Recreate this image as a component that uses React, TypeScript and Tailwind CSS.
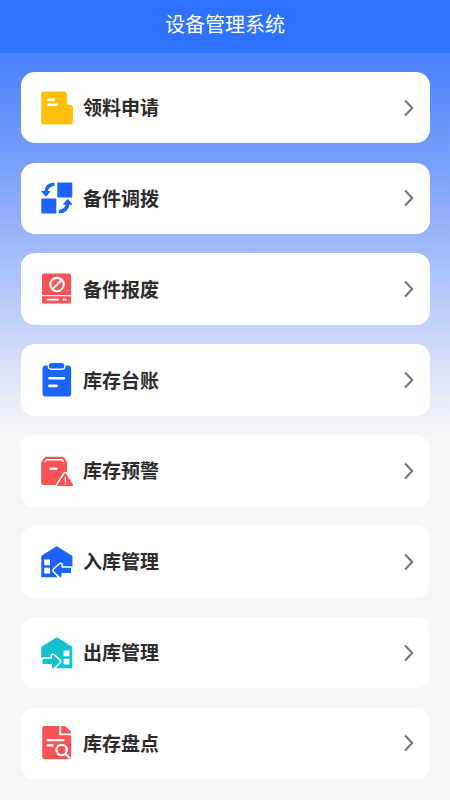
import type { ReactNode } from "react";

function Warehouse({ flip = false }: { flip?: boolean }) {
  const color = flip ? "#12c3cb" : "#1b63fb";
  return (
    <g transform={flip ? "translate(33.6 0) scale(-1 1)" : undefined}>
      <path
        fill={color}
        d="M15.8 2.8Q16.7 2.2 17.6 2.8L31.7 11.6Q32.4 12 32.4 12.8V33.2H2Q1.3 33.2 1.3 32.4V12.8Q1.3 12 1.9 11.6Z"
      />
      <path fill="#fff" d="M4.2 15.6H10V21.3H4.2ZM4.2 23.7H10V29.4H4.2Z" />
      <path fill="#fff" d="M13.6 27.5 21 23H34V35H18.4Z" />
      <path
        fill={color}
        stroke="#fff"
        strokeWidth="3"
        strokeLinejoin="round"
        paintOrder="stroke"
        d="M14.2 25.4 19.7 20.4Q21.6 19.2 21.6 21.6V23.8H31V29H21.6V31.4Q21.4 33.8 19.5 32.4L14.2 27.4Q13.1 26.4 14.2 25.4Z"
      />
    </g>
  );
}

const items: { label: string; icon: ReactNode }[] = [
  {
    label: "领料申请",
    icon: (
      <>
        <path
          fill="#ffc107"
          d="M4 1.4H24Q26.9 1.4 26.9 4.3V12.4Q27 15 29.7 15H30.8Q33 15.2 33 17.6V31.8Q33 34.5 30.3 34.5H4Q1.3 34.5 1.3 31.8V4.1Q1.3 1.4 4 1.4Z"
        />
        <path stroke="#fff" strokeWidth="2.5" strokeLinecap="round" d="M8.4 9.8H14M8.4 14.7H17" />
      </>
    ),
  },
  {
    label: "备件调拨",
    icon: (
      <>
        <g fill="#1b63fb">
          <rect x="17.3" y="2.5" width="15" height="15" rx="1" />
          <rect x="1.3" y="18.5" width="15" height="15" rx="1" />
          <path
            stroke="#1b63fb"
            strokeWidth="1"
            strokeLinejoin="round"
            d="M1.9 11.5H9.9L5.9 16.3ZM23.5 24.2H31.9L27.7 19.4Z"
          />
        </g>
        <path
          stroke="#1b63fb"
          strokeWidth="3.5"
          fill="none"
          d="M14.5 4.2Q6.6 4.4 5.9 12.4M19 31.8Q27 31.2 27.7 23.5"
        />
      </>
    ),
  },
  {
    label: "备件报废",
    icon: (
      <>
        <path
          fill="#fb5355"
          d="M3.6 2.6H29.4Q31 2.6 31 4.2V24H2V4.2Q2 2.6 3.6 2.6ZM2 25.3H31V31Q31 32.6 29.4 32.6H3.6Q2 32.6 2 31Z"
        />
        <g stroke="#fff" fill="none" strokeWidth="2.1">
          <circle cx="17" cy="13.6" r="6.7" />
          <path d="M12.4 18.2 21.6 9" />
          <path strokeWidth="1.6" d="M6.7 28.6H19M22.8 28.6H26.7" />
        </g>
      </>
    ),
  },
  {
    label: "库存台账",
    icon: (
      <>
        <rect x="2.5" y="3.4" width="28.6" height="31.2" rx="3.4" fill="#1b63fb" />
        <rect x="7.6" y="-.5" width="18" height="8.5" rx="4" fill="#fff" />
        <rect x="8.9" y=".9" width="15.4" height="5.7" rx="2.6" fill="#1b63fb" />
        <path stroke="#fff" strokeWidth="2.6" strokeLinecap="round" d="M9.4 16.2H24M9.4 23.9H16.6" />
      </>
    ),
  },
  {
    label: "库存预警",
    icon: (
      <>
        <path
          fill="#fb5355"
          d="M6.4 3.7H22.4Q23.6 3.7 24.3 4.7L26.6 8.2Q27 9 27 10V32H3.4Q1.2 32 1.2 29.8V10Q1.2 9 1.7 8.2L4.4 4.7Q5.2 3.7 6.4 3.7Z"
        />
        <path stroke="#fff" strokeWidth="1.4" fill="none" d="M4.9 8.7 6.7 6.8H22.1L23.8 8.7" />
        <path stroke="#fff" strokeWidth="2.3" d="M9.5 15.7H17.4" />
        <path
          fill="#fb5355"
          stroke="#fff"
          strokeWidth="3"
          strokeLinejoin="round"
          paintOrder="stroke"
          d="M24.5 20.7Q25.3 19.6 26.1 20.7L33 31.7Q33.6 32.9 32.3 32.9H18Q16.7 32.9 17.3 31.7Z"
        />
        <path stroke="#fff" strokeWidth="1.3" d="M25.3 24V28.7M25.3 29.8V31.2" />
      </>
    ),
  },
  { label: "入库管理", icon: <Warehouse /> },
  { label: "出库管理", icon: <Warehouse flip /> },
  {
    label: "库存盘点",
    icon: (
      <>
        <path
          fill="#fb5355"
          d="M4 .9H19.2V10.2H31V31.8Q31 34.2 28.6 34.2H4.6Q2.2 34.2 2.2 31.8V3.2Q2.2 .9 4 .9ZM21.2 .9H25L31 6.6V8.4H21.2Z"
        />
        <path stroke="#fff" strokeWidth="2.2" d="M6.6 15.2H24.4M6.6 20.3H13.4" />
        <g stroke="#fff" strokeWidth="2.3" fill="none" strokeLinecap="round">
          <circle cx="21.6" cy="25" r="5.2" fill="#fb5355" />
          <path d="M25.5 29 29 32.4" />
        </g>
      </>
    ),
  },
];

export default function App() {
  return (
    <div className="flex h-[800px] w-[450px] flex-col overflow-hidden bg-[#f7f7f7] font-['Noto_Sans_CJK_SC',sans-serif]">
      <header className="flex h-[52.5px] shrink-0 items-center justify-center bg-[#2f72ff] pb-1 text-[20px] text-white">
        设备管理系统
      </header>
      <main className="flex flex-1 flex-col gap-[19.2px] bg-[linear-gradient(180deg,#4a80fd_0px,#7a9ffa_110px,#c4d4fa_275px,#f7f7f7_382px)] pr-[20.2px] pl-[21.3px] pt-[19.2px]">
        {items.map(({ label, icon }) => (
          <button
            key={label}
            className="flex h-[71.66px] w-full shrink-0 items-center rounded-[14px] bg-white pr-[15px] pl-[18.7px] text-left"
          >
            <svg className="h-9 w-[34px] shrink-0 overflow-visible" viewBox="0 0 34 36" fill="none">
              {icon}
            </svg>
            <span className="ml-[9px] flex-1 pb-px text-[19px] leading-7 font-bold text-[#2b2b2b]">{label}</span>
            <svg className="h-5 w-3 shrink-0" viewBox="0 0 12 20" fill="none">
              <path
                d="M2.6 3.1 9.2 10 2.6 16.9"
                stroke="#777"
                strokeWidth="2.1"
                strokeLinecap="round"
                strokeLinejoin="round"
              />
            </svg>
          </button>
        ))}
      </main>
    </div>
  );
}
